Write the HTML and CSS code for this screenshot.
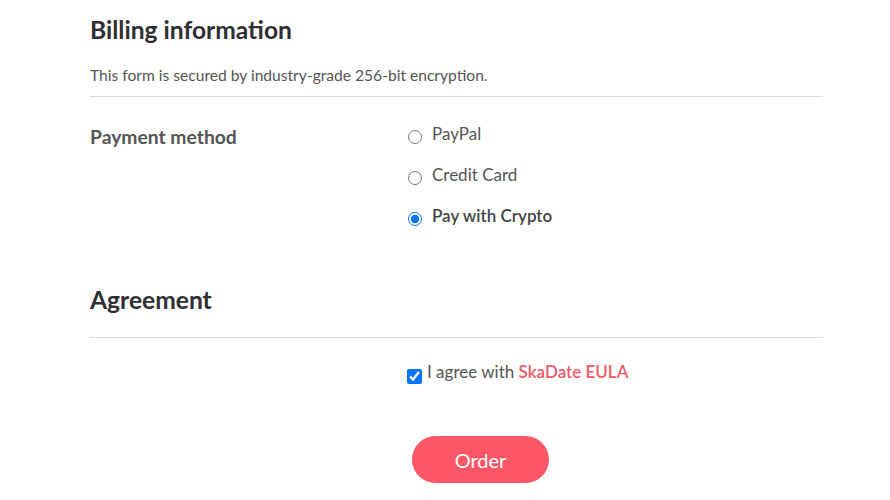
FILE: index.html
```html
<!DOCTYPE html>
<html>
<head>
<meta charset="utf-8">
<link rel="stylesheet" href="styles.css">
</head>
<body>
<div class="page">
  <section class="section">
    <h2 class="title">Billing information</h2>
    <p class="note">This form is secured by industry-grade 256-bit encryption.</p>
    <hr class="divider">
    <div class="row">
      <div class="label">Payment method</div>
      <div class="options">
        <label class="option"><input type="radio" name="pm" class="radio"><span>PayPal</span></label>
        <label class="option"><input type="radio" name="pm" class="radio"><span>Credit Card</span></label>
        <label class="option selected"><input type="radio" name="pm" class="radio" checked><span>Pay with Crypto</span></label>
      </div>
    </div>
  </section>
  <section class="section agreement">
    <h2 class="title">Agreement</h2>
    <hr class="divider">
    <div class="row">
      <div class="label"></div>
      <div class="options">
        <label class="agree"><input type="checkbox" class="check" checked><span>I agree with <a class="eula" href="#">SkaDate EULA</a></span></label>
        <div class="actions"><button class="order" type="button">Order</button></div>
      </div>
    </div>
  </section>
</div>
</body>
</html>
```

FILE: styles.css
```css
html, body {
  margin: 0;
  padding: 0;
  background: #fff;
}
body {
  font-family: Lato, "Open Sans", sans-serif;
  color: #333;
}
.page {
  width: 733px;
  padding: 14px 0 0 90px;
}
.title {
  margin: 0;
  font-size: 24.6px;
  font-weight: 700;
  line-height: 32px;
  color: #2f2f33;
}
.note {
  margin: 18px 0 0;
  font-size: 15.6px;
  line-height: 22px;
  color: #555;
}
.divider {
  margin: 10px 0 0;
  border: 0;
  border-top: 1px solid #dcdcdf;
  height: 0;
}
.row {
  display: flex;
}
.label {
  width: 317px;
  flex: none;
  font-size: 19.3px;
  font-weight: 700;
  color: #555;
  padding-top: 28px;
  line-height: 24px;
}
.options {
  display: flex;
  flex-direction: column;
  padding-top: 24px;
}
.option {
  display: flex;
  align-items: center;
  height: 24px;
  margin-bottom: 17px;
  font-size: 17px;
  color: #555;
}
.option.selected {
  font-weight: 600;
  color: #444;
}
.radio {
  width: 14px;
  height: 14px;
  margin: 7px 10px 0 1px;
}
.agreement {
  margin-top: 40px;
}
.agreement .divider {
  margin-top: 21px;
}
.agreement .label {
  padding-top: 0;
}
.agreement .options {
  padding-top: 0;
}
.agree {
  display: flex;
  align-items: center;
  font-size: 17px;
  color: #555;
  margin-top: 22px;
  line-height: 24px;
}
.check {
  width: 15px;
  height: 15px;
  margin: 8px 5px 0 0;
}
.eula {
  color: #f05a67;
  font-weight: 600;
  text-decoration: none;
}
.actions {
  margin-top: 52px;
  padding-left: 5px;
}
.order {
  width: 137px;
  height: 47px;
  border: 0;
  border-radius: 24px;
  background: #fd5766;
  color: #fff;
  font-family: Lato, sans-serif;
  font-size: 20px;
  cursor: pointer;
}
```
